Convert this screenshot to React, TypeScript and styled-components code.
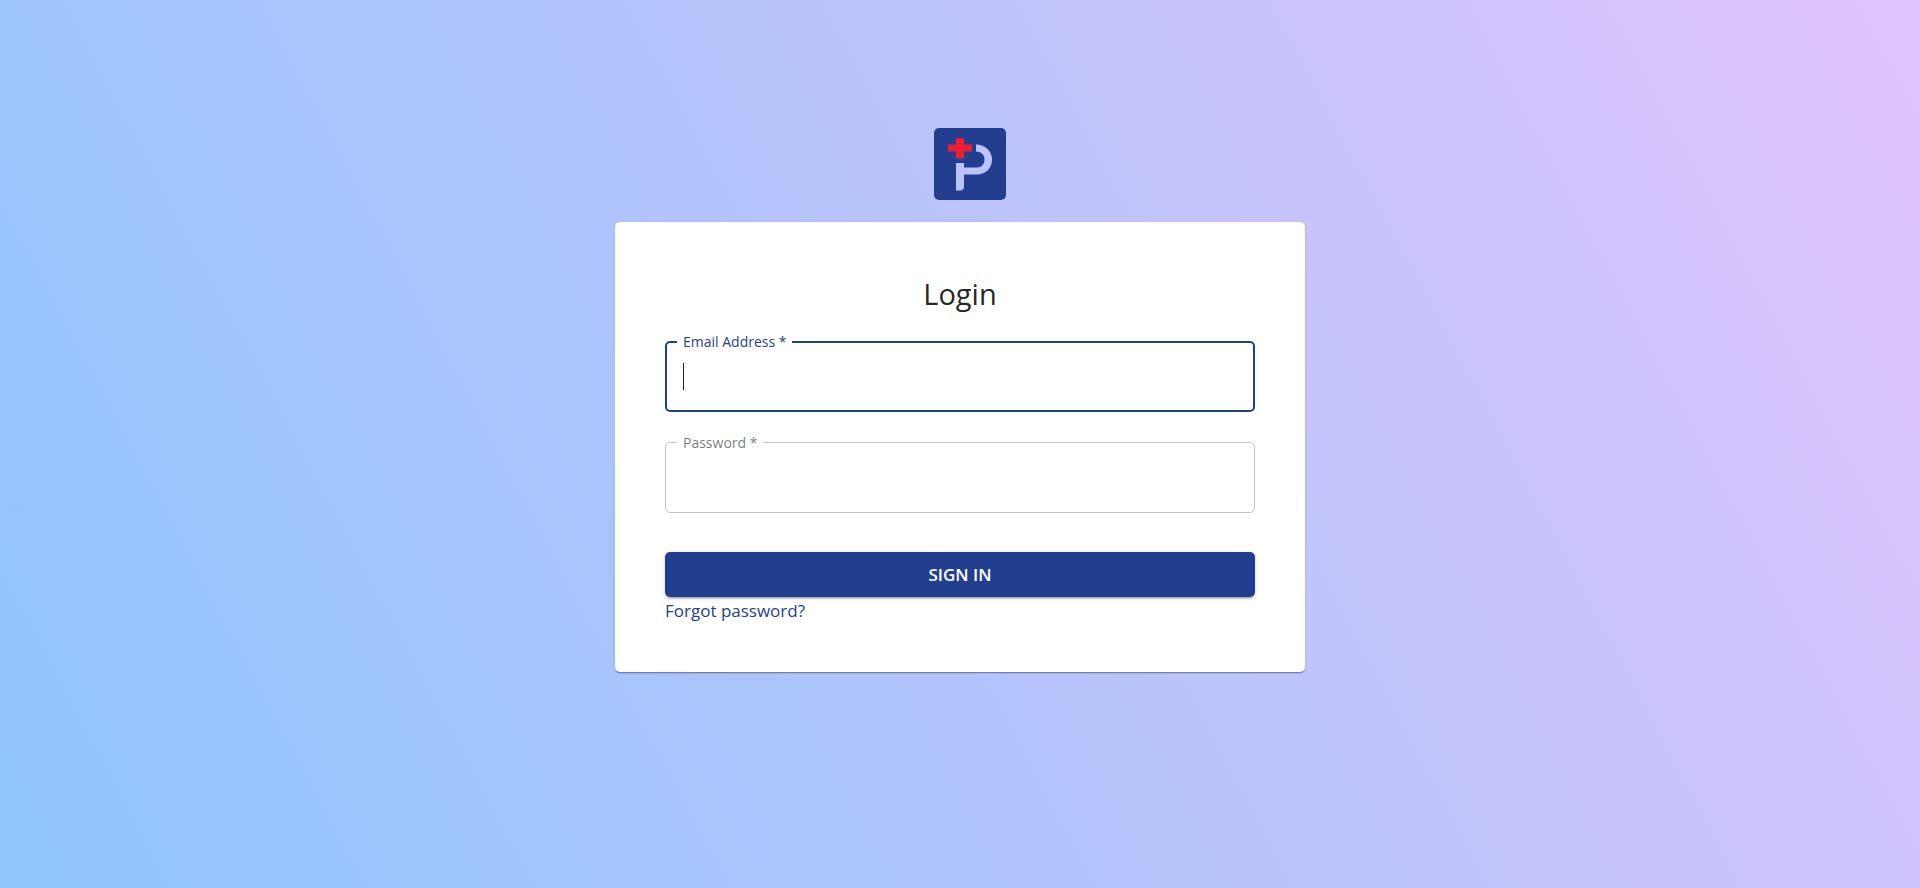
import React, { useState } from "react";
import styled, { createGlobalStyle } from "styled-components";

const navy = "#223f8f";

const GlobalStyle = createGlobalStyle`
  *, *::before, *::after { box-sizing: border-box; }
  body {
    margin: 0;
    font-family: "Segoe UI", "Open Sans", "Noto Sans", sans-serif;
    color: rgba(0, 0, 0, 0.87);
  }
`;

const Page = styled.main`
  display: flex;
  flex-direction: column;
  align-items: center;
  min-height: 100vh;
  padding: 128px 16px 64px;
  background: linear-gradient(62deg, #8ec5fc 0%, #e0c3fc 100%);
`;

const Content = styled.div`
  display: flex;
  flex-direction: column;
  gap: 22px;
  width: 100%;
  max-width: 690px;
`;

const LogoRow = styled.div`
  display: flex;
  justify-content: center;
  padding-left: 20px;
`;

const Logo = styled.svg`
  display: block;
  width: 72px;
  height: 72px;
`;

const Card = styled.section`
  padding: 50px 50px 48px;
  background: #fff;
  border-radius: 5px;
  box-shadow: 0 2px 1px -1px rgba(0, 0, 0, 0.2), 0 1px 1px 0 rgba(0, 0, 0, 0.14),
    0 1px 3px 0 rgba(0, 0, 0, 0.12);
`;

const Title = styled.h1`
  margin: 0 0 26px;
  font-size: 29px;
  font-weight: 400;
  line-height: 43px;
  text-align: center;
`;

const Form = styled.form`
  display: flex;
  flex-direction: column;
`;

const Field = styled.div`
  position: relative;
  margin-bottom: 30px;
`;

const Label = styled.label<{ $active: boolean }>`
  position: absolute;
  top: -9px;
  left: 12px;
  padding: 0 6px;
  background: #fff;
  color: ${(p) => (p.$active ? navy : "rgba(0, 0, 0, 0.54)")};
  font-size: 14px;
  line-height: 20px;
  white-space: nowrap;
`;

const Input = styled.input<{ $active: boolean }>`
  display: block;
  width: 100%;
  height: 71px;
  padding: 0 18px;
  border: ${(p) => (p.$active ? `2px solid ${navy}` : "1px solid #c4c4c4")};
  border-radius: 5px;
  outline: none;
  background: transparent;
  font: inherit;
  font-size: 18px;
  caret-color: transparent;
`;

const Caret = styled.span`
  position: absolute;
  top: 22px;
  left: 18px;
  width: 1px;
  height: 27px;
  background: #212121;
  pointer-events: none;
`;

const SubmitButton = styled.button`
  height: 45px;
  margin-top: 9px;
  border: 0;
  border-radius: 5px;
  background: ${navy};
  color: #fff;
  font: inherit;
  font-size: 17px;
  font-weight: 600;
  line-height: 28px;
  text-transform: uppercase;
  cursor: pointer;
  box-shadow: 0 3px 1px -2px rgba(0, 0, 0, 0.2), 0 2px 2px 0 rgba(0, 0, 0, 0.14),
    0 1px 5px 0 rgba(0, 0, 0, 0.12);
`;

const ForgotLink = styled.a`
  align-self: flex-start;
  color: ${navy};
  font-size: 17px;
  line-height: 27px;
  text-decoration: none;
`;

export default function App() {
  const [active, setActive] = useState("email");
  const [email, setEmail] = useState("");

  return (
    <>
      <GlobalStyle />
      <Page>
        <Content>
          <LogoRow>
            <Logo viewBox="0 0 72 72" role="img" aria-label="Company logo">
              <rect width="72" height="72" rx="5" fill={navy} />
              <path d="M22 10h8v6.500h8v7h-8V30.500h-8v-7h-8v-7h8z" fill="#ed1c2e" />
              <path
                d="M42 16.500c9 0 16 6.500 16 15s-6 15-15 15H30V58.500q0 4-4 4h-4V35h8v4.500h13c4.500 0 7.500-3.500 7.500-8s-3.500-8-8.500-8z"
                fill="#bac4fb"
              />
            </Logo>
          </LogoRow>
          <Card>
            <Title>Login</Title>
            <Form onSubmit={(e) => e.preventDefault()}>
              <Field>
                <Input
                  id="email"
                  type="email"
                  required
                  $active={active === "email"}
                  value={email}
                  onChange={(e) => setEmail(e.target.value)}
                  onFocus={() => setActive("email")}
                />
                <Label htmlFor="email" $active={active === "email"}>
                  Email Address *
                </Label>
                {active === "email" && email === "" && <Caret />}
              </Field>
              <Field>
                <Input
                  id="password"
                  type="password"
                  required
                  $active={active === "password"}
                  onFocus={() => setActive("password")}
                />
                <Label htmlFor="password" $active={active === "password"}>
                  Password *
                </Label>
              </Field>
              <SubmitButton type="submit">Sign In</SubmitButton>
              <ForgotLink href="#forgot">Forgot password?</ForgotLink>
            </Form>
          </Card>
        </Content>
      </Page>
    </>
  );
}
